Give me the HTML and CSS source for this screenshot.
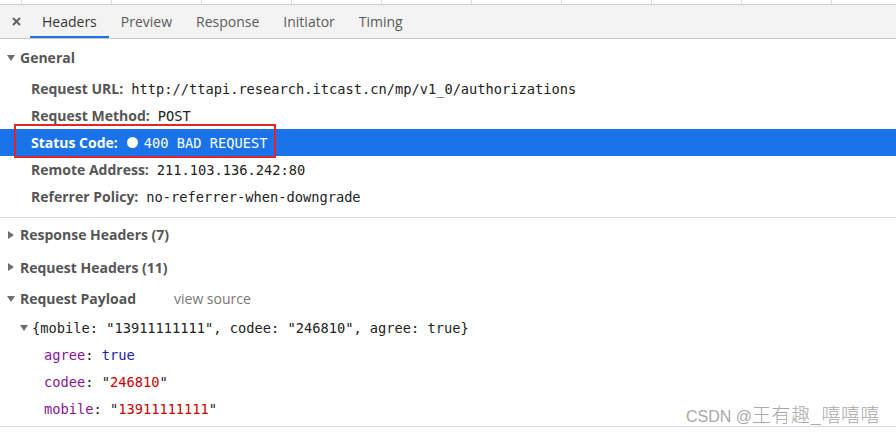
FILE: index.html
```html
<!DOCTYPE html>
<html>
<head>
<meta charset="utf-8">
<link rel="stylesheet" href="styles.css">
</head>
<body>
<div class="page">
  <div class="top-strip">
    <span class="cell first"></span><span class="cell"></span><span class="cell"></span><span class="cell"></span><span class="cell"></span><span class="cell"></span><span class="cell"></span><span class="cell"></span><span class="cell"></span><span class="cell"></span><span class="cell last"></span>
  </div>
  <div class="tabbar">
    <div class="close"><svg width="9" height="9" viewBox="0 0 9 9"><path d="M1 1L8 8M8 1L1 8" stroke="#5f6368" stroke-width="2"/></svg></div>
    <div class="tab active">Headers</div>
    <div class="tab">Preview</div>
    <div class="tab">Response</div>
    <div class="tab">Initiator</div>
    <div class="tab">Timing</div>
  </div>
  <div class="content">
    <section class="sec general">
      <div class="sec-head"><span class="tri down"></span>General</div>
      <div class="rows">
        <div class="row"><span class="label">Request URL:</span><span class="val">http://ttapi.research.itcast.cn/mp/v1_0/authorizations</span></div>
        <div class="row"><span class="label">Request Method:</span><span class="val">POST</span></div>
        <div class="row selected"><span class="label">Status Code:</span><span class="dot"></span><span class="val">400 BAD REQUEST</span></div>
        <div class="row"><span class="label">Remote Address:</span><span class="val">211.103.136.242:80</span></div>
        <div class="row"><span class="label">Referrer Policy:</span><span class="val">no-referrer-when-downgrade</span></div>
      </div>
    </section>
    <section class="sec">
      <div class="sec-head h1"><span class="tri right"></span>Response Headers (7)</div>
      <div class="sec-head h2"><span class="tri right"></span>Request Headers (11)</div>
      <div class="sec-head h3"><span class="tri down"></span>Request Payload<span class="view-source">view source</span></div>
      <div class="payload">
        <div class="obj"><span class="tri down small"></span><span class="mono">{mobile: "13911111111", codee: "246810", agree: true}</span></div>
        <div class="prop"><span class="key">agree</span><span class="punc">: </span><span class="bool">true</span></div>
        <div class="prop"><span class="key">codee</span><span class="punc">: "</span><span class="str">246810</span><span class="punc">"</span></div>
        <div class="prop"><span class="key">mobile</span><span class="punc">: "</span><span class="str">13911111111</span><span class="punc">"</span></div>
      </div>
    </section>
  </div>
  <div class="annot-box"></div>
  <div class="watermark"><span class="wm-latin">CSDN @</span><span class="wm-cjk">王有趣_嘻嘻嘻</span></div>
</div>
</body>
</html>
```
FILE: styles.css
```css
* { box-sizing: border-box; }
html, body { margin: 0; padding: 0; background: #fff; }
.page {
  position: relative;
  width: 896px;
  height: 432px;
  overflow: hidden;
  font-family: "Open Sans", "Noto Sans", sans-serif;
  font-size: 14px;
  color: #333;
}
.top-strip {
  display: flex;
  height: 5px;
  border-bottom: 1px solid #cbcbcb;
}
.cell { width: 90px; border-right: 1px solid #dedede; }
.cell.first { width: 22px; }
.cell.last { flex: 1; border-right: none; }
.tabbar {
  display: flex;
  height: 34px;
  background: #f3f3f3;
  border-bottom: 1px solid #cbcbcb;
}
.close {
  width: 30px;
  display: flex;
  align-items: center;
  justify-content: center;
  padding-left: 2px;
}
.tab {
  padding: 0 12px;
  display: flex;
  align-items: center;
  border-bottom: 2px solid transparent;
  padding-top: 1px;
  color: #5a5a5a;
}
.tab.active { color: #333; border-bottom-color: #1a73e8; }
.content { display: flex; flex-direction: column; }
.sec-head {
  height: 32px;
  display: flex;
  align-items: center;
  padding-left: 7px;
  font-weight: 700;
  color: #555;
}
.general { padding-top: 4px; padding-bottom: 7px; border-bottom: 1px solid #dcdcdc; }
.general .sec-head { height: 28px; }
.rows { padding-top: 4px; }
.tri { display: inline-block; width: 0; height: 0; margin-right: 5px; }
.tri.down { border-left: 4px solid transparent; border-right: 4px solid transparent; border-top: 6px solid #6e6e6e; margin-top: 1px; }
.tri.right { border-top: 4px solid transparent; border-bottom: 4px solid transparent; border-left: 6px solid #6e6e6e; margin-left: 1px; margin-right: 6px; }
.h1 { height: 33px; }
.h2 { height: 32px; }
.h3 { height: 31px; }
.view-source { font-weight: 400; color: #777; margin-left: 38px; }
.row {
  height: 27px;
  display: flex;
  align-items: center;
  padding-left: 31px;
  white-space: nowrap;
}
.row.selected { background: #1a73e8; }
.row.selected .label, .row.selected .val { color: #fff; }
.label { font-weight: 700; color: #555; margin-right: 8px; }
.val, .mono, .prop {
  font-family: "DejaVu Sans Mono", "Liberation Mono", monospace;
  font-size: 13.7px;
  color: #222;
}
.dot { width: 11px; height: 11px; border-radius: 50%; background: #fff; margin-right: 6px; margin-left: 1px; }
.payload { padding-bottom: 4px; border-bottom: 1px solid #dcdcdc; }
.obj { height: 27px; display: flex; align-items: center; padding-left: 20px; }
.tri.small { margin-right: 4px; }
.prop { height: 27px; display: flex; align-items: center; padding-left: 44px; white-space: pre; }
.key { color: #881391; }
.punc { color: #222; }
.bool { color: #1a1aa6; }
.str { color: #c80000; }
.annot-box {
  position: absolute;
  left: 14px;
  top: 124px;
  width: 262px;
  height: 34px;
  border: 2px solid #e3242b;
}
.watermark {
  position: absolute;
  right: 16px;
  top: 400px;
  color: #a8a8a8;
  white-space: nowrap;
}
.wm-latin { font-family: "Liberation Sans", sans-serif; font-size: 16px; }
.wm-cjk { font-family: "Noto Sans CJK SC", sans-serif; font-size: 19px; letter-spacing: 0.5px; font-weight: 300; }
```
